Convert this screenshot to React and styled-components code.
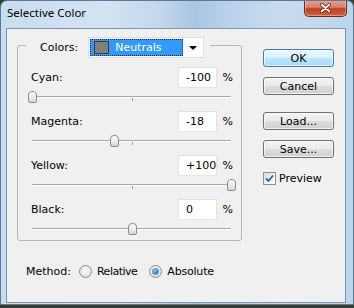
import React from "react";
import styled, { createGlobalStyle } from "styled-components";

const GlobalStyle = createGlobalStyle`
  html, body { margin: 0; padding: 0; background: #34402c; }
  body { font-family: "DejaVu Sans", sans-serif; font-size: 11px; color: #000; }
  * { box-sizing: border-box; }
`;

const Window = styled.div`
  width: 354px;
  height: 305px;
  display: flex;
  flex-direction: column;
  border: 1px solid #5d7896;
  border-radius: 7px 7px 0 0;
  background: linear-gradient(90deg, #c9ddf0 0%, #d2e3f3 30%, #c3d8ed 45%, #a9c5e2 55%, #b9d2ea 65%, #c8dcef 80%, #bcd4eb 100%);
  overflow: hidden;
`;

const TitleBar = styled.div`
  height: 27px;
  display: flex;
  justify-content: space-between;
  align-items: flex-start;
  flex-shrink: 0;
`;

const Title = styled.div`
  font-family: "Noto Sans", sans-serif;
  font-size: 11.5px;
  color: #000;
  padding: 4px 0 0 6px;
`;

const CloseButton = styled.div`
  width: 43px;
  height: 17px;
  margin: -1px 6px 0 0;
  border: 1px solid #6b2a22;
  border-top: none;
  border-radius: 0 0 5px 5px;
  background: linear-gradient(180deg, #e8a593 0%, #d7806b 45%, #c03f24 55%, #d2603f 100%);
  display: flex;
  align-items: center;
  justify-content: center;
  box-shadow: inset 0 0 0 1px rgba(255, 255, 255, 0.35);
`;

const Client = styled.div`
  flex: 1;
  margin: 0 7px 1px 5px;
  border: 1px solid #7f93a9;
  background: #f0f0f0;
  display: flex;
  padding: 4px 0 0 10px;
`;

const LeftColumn = styled.div`
  display: flex;
  flex-direction: column;
  width: 225px;
`;

const Group = styled.fieldset`
  margin: 0;
  padding: 0 8px 2px 8px;
  border: 1px solid #b5b5b5;
  border-radius: 3px;
  min-width: 0;
`;

const Legend = styled.legend`
  padding: 4px 6px 0 14px;
  display: flex;
  align-items: center;
`;

const LegendLabel = styled.span`
  margin-right: 10px;
`;

const Select = styled.div`
  width: 116px;
  height: 21px;
  background: #fff;
  border: 1px solid #dedede;
  display: flex;
  align-items: center;
  padding: 1px;
`;

const Selected = styled.div`
  flex: 1;
  height: 100%;
  background: #3399ff;
  border: 1px dotted #1a3050;
  display: flex;
  align-items: center;
  padding-left: 3px;
  color: #fff;
`;

const Swatch = styled.span`
  width: 15px;
  height: 13px;
  background: #808080;
  border: 1px solid #3a3a3a;
  margin-right: 6px;
`;

const Arrow = styled.span`
  width: 19px;
  display: flex;
  justify-content: center;
  &::after {
    content: "";
    border-left: 4px solid transparent;
    border-right: 4px solid transparent;
    border-top: 4px solid #000;
  }
`;

const SliderBlock = styled.div`
  padding-left: 5px;
  margin-top: ${(p) => (p.$first ? "9px" : "5px")};
`;

const LabelRow = styled.div`
  display: flex;
  align-items: center;
  height: 21px;
`;

const Label = styled.span`
  flex: 1;
`;

const ValueBox = styled.div`
  width: 39px;
  height: 21px;
  background: #fff;
  border: 1px solid #e4e4e4;
  display: flex;
  align-items: center;
  padding-left: 7px;
`;

const Percent = styled.span`
  width: 16px;
  text-align: right;
`;

const Track = styled.div`
  position: relative;
  height: 18px;
  margin: 0 2px 0 1px;
  &::before {
    content: "";
    position: absolute;
    left: 0;
    right: 0;
    top: 8px;
    height: 1px;
    background: #a9a9a9;
    box-shadow: 0 1px 0 #ffffff;
  }
  &::after {
    content: "";
    position: absolute;
    left: 50%;
    top: 10px;
    width: 1px;
    height: 3px;
    background: #9a9a9a;
  }
`;

const Thumb = styled.div`
  position: absolute;
  top: 3px;
  width: 9px;
  height: 12px;
  margin-left: -4px;
  border: 1px solid #8c8c8c;
  border-radius: 4px 4px 2px 2px;
  background: linear-gradient(180deg, #ffffff 0%, #ececec 50%, #d6d6d6 100%);
  z-index: 1;
`;

const MethodRow = styled.div`
  display: flex;
  align-items: center;
  height: 16px;
  margin-top: 22px;
  padding-left: 9px;
`;

const RadioText = styled.span`
  letter-spacing: ${(p) => p.$tight || 0}px;
`;

const Radio = styled.span`
  width: 13px;
  height: 13px;
  border-radius: 50%;
  border: 1px solid #8f8f8f;
  background: radial-gradient(circle at 50% 40%, #ffffff 0%, #e6e6e6 60%, #cfcfcf 100%);
  margin: 0 5px 0 ${(p) => p.$gap}px;
  display: flex;
  align-items: center;
  justify-content: center;
  &::after {
    content: "";
    display: ${(p) => (p.$checked ? "block" : "none")};
    width: 5px;
    height: 5px;
    border-radius: 50%;
    background: radial-gradient(circle at 40% 35%, #8fd8ff 0%, #1d78c8 60%, #0b4f8c 100%);
    box-shadow: 0 0 0 1px #6a9cc6;
  }
`;

const RightColumn = styled.div`
  display: flex;
  flex-direction: column;
  width: 71px;
  margin-left: 21px;
  padding-top: 16px;
`;

const Button = styled.div`
  height: 18px;
  margin-top: ${(p) => p.$gap}px;
  border: 1px solid ${(p) => (p.$default ? "#3c7fb1" : "#707070")};
  border-radius: 3px;
  display: flex;
  align-items: center;
  justify-content: center;
  background: ${(p) =>
    p.$default
      ? "linear-gradient(180deg, #eaf6fd 0%, #d9f0fc 48%, #bee6fd 52%, #a7d9f5 100%)"
      : "linear-gradient(180deg, #f2f2f2 0%, #ebebeb 48%, #dddddd 52%, #cfcfcf 100%)"};
  box-shadow: inset 0 0 0 1px rgba(255, 255, 255, 0.7);
`;

const CheckRow = styled.div`
  display: flex;
  align-items: center;
  margin-top: 14px;
`;

const CheckBox = styled.span`
  width: 13px;
  height: 13px;
  border: 1px solid #8e8f8f;
  background: linear-gradient(135deg, #dcdcdc 0%, #ffffff 100%);
  margin-right: 3px;
  display: flex;
  align-items: center;
  justify-content: center;
`;

const sliders = [
  { name: "Cyan:", value: -100 },
  { name: "Magenta:", value: -18 },
  { name: "Yellow:", value: 100 },
  { name: "Black:", value: 0 },
];

const fmt = (v) => (v > 0 ? `+${v}` : `${v}`);

export default function App() {
  return (
    <>
      <GlobalStyle />
      <Window>
        <TitleBar>
          <Title>Selective Color</Title>
          <CloseButton>
            <svg width="11" height="10" viewBox="0 0 11 10">
              <path d="M1.5 1.5 L9.5 8.5 M9.5 1.5 L1.5 8.5" stroke="#5a1a10" strokeWidth="3.4" strokeLinecap="round" />
              <path d="M1.5 1.5 L9.5 8.5 M9.5 1.5 L1.5 8.5" stroke="#ffffff" strokeWidth="1.8" strokeLinecap="round" />
            </svg>
          </CloseButton>
        </TitleBar>
        <Client>
          <LeftColumn>
            <Group>
              <Legend>
                <LegendLabel>Colors:</LegendLabel>
                <Select>
                  <Selected>
                    <Swatch />
                    Neutrals
                  </Selected>
                  <Arrow />
                </Select>
              </Legend>
              {sliders.map((s, i) => (
                <SliderBlock key={s.name} $first={i === 0}>
                  <LabelRow>
                    <Label>{s.name}</Label>
                    <ValueBox>{fmt(s.value)}</ValueBox>
                    <Percent>%</Percent>
                  </LabelRow>
                  <Track>
                    <Thumb style={{ left: `${((s.value + 100) / 200) * 100}%` }} />
                  </Track>
                </SliderBlock>
              ))}
            </Group>
            <MethodRow>
              Method:
              <Radio $gap={8} />
              <RadioText $tight={-0.5}>Relative</RadioText>
              <Radio $gap={12} $checked />
              <RadioText $tight={-0.2}>Absolute</RadioText>
            </MethodRow>
          </LeftColumn>
          <RightColumn>
            <Button $default $gap={0}>OK</Button>
            <Button $gap={10}>Cancel</Button>
            <Button $gap={17}>Load...</Button>
            <Button $gap={10}>Save...</Button>
            <CheckRow>
              <CheckBox>
                <svg width="9" height="9" viewBox="0 0 9 9">
                  <path d="M1 4.5 L3.5 7 L8 1.5" fill="none" stroke="#2a5ea8" strokeWidth="1.8" />
                </svg>
              </CheckBox>
              Preview
            </CheckRow>
          </RightColumn>
        </Client>
      </Window>
    </>
  );
}
